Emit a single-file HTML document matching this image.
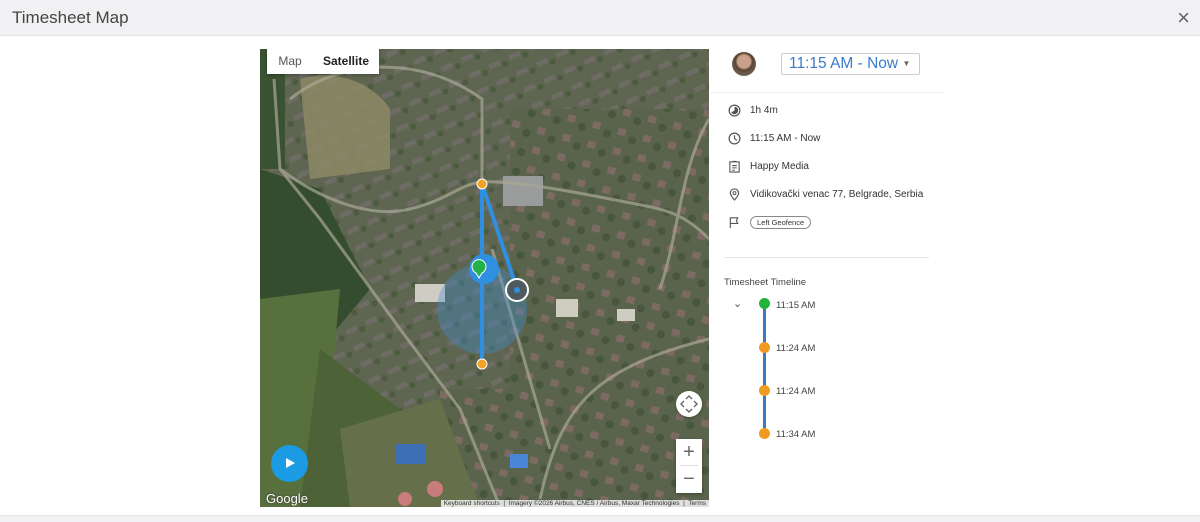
<!DOCTYPE html>
<html><head><meta charset="utf-8">
<style>
*{margin:0;padding:0;box-sizing:border-box}
body{width:1200px;height:522px;background:#fff;font-family:"Liberation Sans",sans-serif;position:relative;overflow:hidden;color:#333}
.hdr{position:absolute;left:0;top:0;width:1200px;height:36px;background:#f1f1f3;border-bottom:1px solid #e4e4e6}
.hdr h1{position:absolute;left:12px;top:8px;font-size:17px;font-weight:normal;color:#444}
.hdr .x{position:absolute;right:10px;top:5px;font-size:22px;color:#666}
.map{position:absolute;left:260px;top:49px;width:449px;height:458px;overflow:hidden;background:#4a5a3c}
.foot{position:absolute;left:0;top:515px;width:1200px;height:7px;background:#f1f1f3;border-top:1px solid #e6e6e6}
.side{position:absolute;left:710px;top:40px;width:235px}
.row{position:absolute;left:18px;font-size:10px;color:#333;display:flex;align-items:center}
.row svg{margin-right:9px}
.tl{position:absolute;font-size:9.5px;color:#444}
</style></head><body>
<div class="hdr"><h1>Timesheet Map</h1><div class="x">×</div></div>

<div class="map">
<svg width="449" height="458" viewBox="0 0 449 458">
<defs>
<pattern id="bld" width="22" height="18" patternUnits="userSpaceOnUse" patternTransform="rotate(-25)">
<rect width="22" height="18" fill="#5e6651"/>
<rect x="2" y="3" width="12" height="5" fill="#6f6c66"/>
<circle cx="18" cy="9" r="3" fill="#4c5a40"/>
</pattern>
<pattern id="roof" width="26" height="20" patternUnits="userSpaceOnUse" patternTransform="rotate(15)">
<rect width="26" height="20" fill="#5a644c"/>
<rect x="3" y="3" width="8" height="7" fill="#7d6a62"/>
<circle cx="19" cy="12" r="4" fill="#47563c"/>
</pattern>
</defs>
<rect width="449" height="458" fill="url(#bld)"/>
<rect x="250" y="60" width="199" height="300" fill="url(#roof)"/>
<rect x="180" y="340" width="269" height="118" fill="url(#roof)"/>
<path d="M40 30 C70 20 110 30 130 60 L130 120 L50 130 Z" fill="#8d8866" opacity=".85"/>
<path d="M0 120 L60 140 L110 240 L60 300 L0 300Z" fill="#354d2f"/>
<path d="M0 0 L25 0 L25 120 L0 120Z" fill="#3a5231"/>
<path d="M0 250 L80 240 L60 458 L0 458Z" fill="#58703e"/>
<path d="M60 300 L140 360 L150 458 L40 458Z" fill="#4d6337"/>
<path d="M80 380 L180 350 L220 458 L90 458Z" fill="#65704b"/>
<rect x="243" y="127" width="40" height="30" fill="#9a9c9c"/>
<rect x="155" y="235" width="30" height="18" fill="#cfcdc3"/>
<rect x="296" y="250" width="22" height="18" fill="#cfcdc0"/>
<rect x="357" y="260" width="18" height="12" fill="#cfcdc0"/>
<rect x="135" y="395" width="30" height="20" fill="#3d6fb5"/>
<rect x="250" y="405" width="18" height="14" fill="#4a86d8"/>
<circle cx="175" cy="440" r="8" fill="#c97c7c"/><circle cx="145" cy="450" r="7" fill="#c97c7c"/>
<g fill="none" stroke="#aaa896" stroke-width="3" opacity=".7">
<path d="M14 30 L20 120 L60 170 L140 280 L200 360 L240 458"/>
<path d="M20 120 C60 150 110 170 150 160 S 200 135 222 133 S 300 140 350 150 S 420 160 449 190"/>
<path d="M30 50 C80 10 160 5 222 50 L222 133"/>
<path d="M280 450 C300 360 330 320 449 290"/>
<path d="M400 240 C420 180 420 120 449 70"/>
<path d="M232 200 L290 400"/>
</g>
<ellipse cx="222" cy="260" rx="45" ry="45" fill="#3b8ed8" opacity=".35"/>
<g stroke="#2f8fe0" stroke-width="4" fill="none" stroke-linecap="round">
<path d="M222 135 L222 315"/><path d="M222 135 L257 240"/>
</g>
<circle cx="224" cy="220" r="15" fill="#2f8fe0"/>
<circle cx="257" cy="241" r="11" fill="#4e5a5e" stroke="#fff" stroke-width="2"/>
<circle cx="257" cy="241" r="3" fill="#2f8fe0"/>
<path d="M216 224 a7 7 0 1 1 6 0 L219 229 Z" fill="#25b14a" stroke="#fff" stroke-width="1"/>
<circle cx="222" cy="135" r="5" fill="#f2a227" stroke="#fff"/>
<circle cx="222" cy="315" r="5" fill="#f2a227" stroke="#fff"/>
</svg>
<div style="position:absolute;left:7px;top:0;width:112px;height:25px;background:#fff;box-shadow:0 1px 3px rgba(0,0,0,.3);display:flex;font-size:12px">
<div style="width:46px;text-align:center;line-height:24px;color:#555">Map</div>
<div style="flex:1;text-align:center;line-height:24px;font-weight:bold;color:#222">Satellite</div></div>
<div style="position:absolute;left:416px;top:342px;width:26px;height:26px;border-radius:50%;background:#fff;box-shadow:0 1px 3px rgba(0,0,0,.3)">
<svg width="26" height="26" viewBox="0 0 26 26" fill="none" stroke="#666" stroke-width="1.4"><path d="M10 8l3-3 3 3M10 18l3 3 3-3M8 10l-3 3 3 3M18 10l3 3-3 3"/></svg></div>
<div style="position:absolute;left:416px;top:390px;width:26px;height:54px;background:#fff;box-shadow:0 1px 3px rgba(0,0,0,.3);text-align:center;font-size:20px;color:#666;line-height:26px">+<div style="border-top:1px solid #ddd;margin:0 4px">−</div></div>
<div style="position:absolute;left:11px;top:396px;width:37px;height:37px;border-radius:50%;background:#1b9be3;"><div style="position:absolute;left:15px;top:13px;border-left:9px solid #fff;border-top:5.5px solid transparent;border-bottom:5.5px solid transparent"></div></div>
<div style="position:absolute;left:6px;top:442px;font-size:13px;color:#fff;text-shadow:0 0 2px #333">Google</div>
<div style="position:absolute;right:0;top:451px;height:8px;background:rgba(245,245,245,.85);font-size:6.5px;color:#333;padding:0 3px;line-height:8px;white-space:nowrap">Keyboard shortcuts &nbsp;|&nbsp; Imagery ©2026 Airbus, CNES / Airbus, Maxar Technologies &nbsp;|&nbsp; Terms</div>
</div>

<div class="side">
<div style="position:absolute;left:22px;top:12px;width:24px;height:24px;border-radius:50%;background:radial-gradient(circle at 50% 40%,#c9a08a 0 35%,#5a4636 45%,#8a7868 100%)"></div>
<div style="position:absolute;left:71px;top:13px;width:139px;height:22px;border:1px solid #ccc;border-radius:2px;color:#3a7bc8;font-size:15.5px;line-height:20px;padding-left:7px">11:15 AM - Now <span style="font-size:8px;color:#666;vertical-align:middle">▼</span></div>
<div style="position:absolute;left:0;top:52px;width:235px;border-top:1px solid #eee"></div>
<div class="row" style="top:64px"><svg width="13" height="13" viewBox="0 0 14 14"><circle cx="7" cy="7" r="5.8" fill="none" stroke="#555" stroke-width="1.3"/><path d="M7 3 A4 4 0 1 1 3.5 9 L7 7Z" fill="#555"/></svg>1h 4m</div>
<div class="row" style="top:92px"><svg width="13" height="13" viewBox="0 0 14 14"><circle cx="7" cy="7" r="5.8" fill="none" stroke="#555" stroke-width="1.3"/><path d="M7 3.5V7L9.5 9" fill="none" stroke="#555" stroke-width="1.3"/></svg>11:15 AM - Now</div>
<div class="row" style="top:120px"><svg width="13" height="13" viewBox="0 0 14 14"><rect x="2" y="2" width="10" height="11" fill="none" stroke="#555" stroke-width="1.2"/><path d="M5 1.5h4M4.5 6h5M4.5 8.5h5M4.5 11h3" stroke="#555" stroke-width="1.1"/></svg>Happy Media</div>
<div class="row" style="top:148px"><svg width="13" height="13" viewBox="0 0 14 14"><path d="M7 13C4 9.5 2.5 7.5 2.5 5.5a4.5 4.5 0 0 1 9 0C11.5 7.5 10 9.5 7 13Z" fill="none" stroke="#555" stroke-width="1.2"/><circle cx="7" cy="5.5" r="1.6" fill="none" stroke="#555"/></svg>Vidikovački venac 77, Belgrade, Serbia</div>
<div class="row" style="top:176px"><svg width="13" height="13" viewBox="0 0 14 14"><path d="M2.5 13V2h8l-1.5 3 1.5 3h-8" fill="none" stroke="#555" stroke-width="1.2"/></svg><span style="border:1px solid #888;border-radius:8px;padding:1px 6px;font-size:7.5px">Left Geofence</span></div>
<div style="position:absolute;left:14px;top:217px;width:205px;border-top:1px solid #e6e6e6"></div>
<div class="tl" style="left:14px;top:237px;font-size:9.5px">Timesheet Timeline</div>
<div class="tl" style="left:23px;top:257px;font-size:11px;color:#555">⌄</div>
<div style="position:absolute;left:53px;top:266px;width:3px;height:126px;background:#3a78c0"></div>
<div style="position:absolute;left:49px;top:258px;width:11px;height:11px;border-radius:50%;background:#22b33a"></div>
<div class="tl" style="left:66px;top:260px">11:15 AM</div>
<div style="position:absolute;left:49px;top:302px;width:11px;height:11px;border-radius:50%;background:#f29a1f"></div>
<div class="tl" style="left:66px;top:303px">11:24 AM</div>
<div style="position:absolute;left:49px;top:345px;width:11px;height:11px;border-radius:50%;background:#f29a1f"></div>
<div class="tl" style="left:66px;top:346px">11:24 AM</div>
<div style="position:absolute;left:49px;top:388px;width:11px;height:11px;border-radius:50%;background:#f29a1f"></div>
<div class="tl" style="left:66px;top:389px">11:34 AM</div>
</div>
<div class="foot"></div>
</body></html>
